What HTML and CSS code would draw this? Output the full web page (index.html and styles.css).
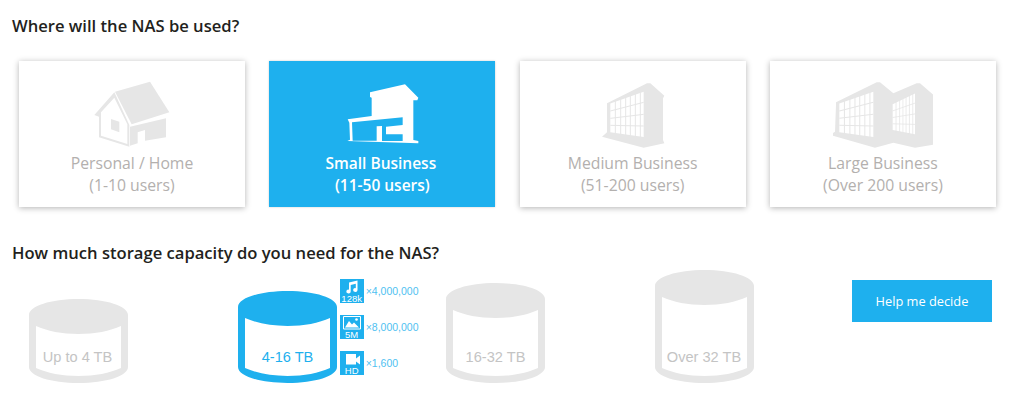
FILE: index.html
```html
<!DOCTYPE html>
<html lang="en">

<head>
    <meta charset="UTF-8">
    <meta name="viewport" content="width=device-width, initial-scale=1.0">
    <title>NAS Selector</title>
    <link rel="stylesheet" href="styles.css">
</head>

<body>
    <svg class="defs" width="0" height="0">
        <defs>
            <g id="windows">
                <path class="glass" d="M0 35V0.5L100 -35V101L0 87Z" />
                <path class="bars" d="M15 -10V95M31 -15V97M46 -20V99M60 -25V101M75 -30V103M90 -35V105" />
                <path class="bars" d="M0 23L100 -3M0 45L100 33M0 66L100 68" />
            </g>
        </defs>
    </svg>

    <h2 class="title">Where will the NAS be used?</h2>
    <div class="usage">
        <div class="usage-card">
            <svg class="usage-icon" viewBox="-9 0 300 240">
                <path class="grey" d="M90 50L195 20L253 112L140 148Z" />
                <path class="grey" fill-rule="evenodd" d="M88 52L28 120L42 125V187L133 215V150ZM88 68L48 112V182L127 207V148Z" />
                <path class="grey" d="M78 132L103 140V172L78 163Z" />
                <path class="grey" d="M135 155L243 130V187L180 197V165L158 172V205L135 212Z" />
            </svg>
            <div class="usage-name">Personal / Home</div>
            <div>(1-10 users)</div>
        </div>
        <div class="usage-card selected">
            <svg class="usage-icon" viewBox="6 0 300 240">
                <path class="white" d="M120 52L225 28L265 68L262 76H250V195L265 198V205L52 198L60 194L58 143L53 133L125 123V68L120 66Z" />
                <path class="blue" d="M66 142L218 127V150L168 155V178H218V198H156V153L140 154V197H68Z" />
            </svg>
            <div class="usage-name">Small Business</div>
            <div>(11-50 users)</div>
        </div>
        <div class="usage-card">
            <svg class="usage-icon" viewBox="-22 0 300 240">
                <path class="grey" d="M50 85L170 25H180L222 62L218 70V195L222 205L160 218L35 185L50 172Z" />
                <use href="#windows" transform="translate(60 85)" />
            </svg>
            <div class="usage-name">Medium Business</div>
            <div>(51-200 users)</div>
        </div>
        <div class="usage-card">
            <svg class="usage-icon" viewBox="24 0 300 240">
                <path class="grey" d="M33 82L155 22H165L205 55L275 25H285L328 62L325 70V200L330 208L270 218L205 203L150 218L15 180L30 170L33 90Z" />
                <use href="#windows" transform="translate(43 85) scale(1.02 1)" />
                <use href="#windows" transform="translate(203 87) scale(.67 .9)" />
            </svg>
            <div class="usage-name">Large Business</div>
            <div>(Over 200 users)</div>
        </div>
    </div>

    <h2 class="title">How much storage capacity do you need for the NAS?</h2>
    <div class="storage">
        <div class="disk">
            <svg width="99" height="84" viewBox="0 0 99 84">
                <path class="grey" fill-rule="evenodd" d="M0 16C0 7 22 0 49.500 0S99 7 99 16V68C99 77 77 84 49.500 84S0 77 0 68ZM7 27C18 32 33 35 49.500 35S81 32 92 27V69C81 74 66 77 49.500 77S18 74 7 69Z" />
                <text class="disk-label" x="48.500" y="63">Up to 4 TB</text>
            </svg>
        </div>
        <div class="disk on">
            <svg width="99" height="92" viewBox="0 0 99 92">
                <path class="sky" fill-rule="evenodd" d="M0 16C0 7 22 0 49.500 0S99 7 99 16V76C99 85 77 92 49.500 92S0 85 0 76ZM7 27C18 32 33 35 49.500 35S81 32 92 27V77C81 82 66 85 49.500 85S18 82 7 77Z" />
                <text class="disk-label" x="49.500" y="71">4-16 TB</text>
            </svg>
            <ul class="media">
                <li>
                    <span class="badge">
                        <svg class="badge-icon" viewBox="0 0 24 14">
                            <path class="white" d="M9 2.500L17.500 0.500V10A2.200 1.900 0 1 1 15.800 8.200V3.700L10.700 4.900V11.500A2.200 1.900 0 1 1 9 9.700Z" />
                        </svg>
                        <span class="badge-text">128k</span>
                    </span>
                    <span>×4,000,000</span>
                </li>
                <li>
                    <span class="badge">
                        <svg class="badge-icon" viewBox="0 0 24 14">
                            <path class="frame" d="M3.500 0.500H20.500V13H3.500Z" />
                            <path class="white" d="M5 11.500L9 5L12 8.500L14 6.500L19 11.500Z" />
                            <circle class="white" cx="16.500" cy="3.500" r="1.300" />
                        </svg>
                        <span class="badge-text">5M</span>
                    </span>
                    <span>×8,000,000</span>
                </li>
                <li>
                    <span class="badge">
                        <svg class="badge-icon" viewBox="0 0 24 14">
                            <path class="white" d="M6 2H16V6.500L20 3.500V12.500L16 9.500V12.500H6Z" />
                        </svg>
                        <span class="badge-text">HD</span>
                    </span>
                    <span>×1,600</span>
                </li>
            </ul>
        </div>
        <div class="disk">
            <svg width="99" height="100" viewBox="0 0 99 100">
                <path class="grey" fill-rule="evenodd" d="M0 16C0 7 22 0 49.500 0S99 7 99 16V84C99 93 77 100 49.500 100S0 93 0 84ZM7 27C18 32 33 35 49.500 35S81 32 92 27V85C81 90 66 93 49.500 93S18 90 7 85Z" />
                <text class="disk-label" x="49.500" y="79">16-32 TB</text>
            </svg>
        </div>
        <div class="disk">
            <svg width="99" height="113" viewBox="0 0 99 113">
                <path class="grey" fill-rule="evenodd" d="M0 16C0 7 22 0 49.500 0S99 7 99 16V97C99 106 77 113 49.500 113S0 106 0 97ZM7 27C18 32 33 35 49.500 35S81 32 92 27V98C81 103 66 106 49.500 106S18 103 7 98Z" />
                <text class="disk-label" x="49" y="92">Over 32 TB</text>
            </svg>
        </div>
        <button type="button" class="help">Help me decide</button>
    </div>
</body>

</html>
```

FILE: styles.css
```css
body {
    font-family: "Open Sans", Arial, sans-serif;
    background-color: #fff;
    color: #231f20;
    margin: 0;
    padding: 0;
    overflow: hidden;
}

.defs {
    position: absolute;
}

.title {
    font-size: 16.6px;
    font-weight: 600;
    line-height: 22px;
    margin: 0;
    padding-left: 12px;
}

h2:first-of-type {
    padding-top: 15px;
}

.usage {
    display: flex;
    gap: 24.33px;
    padding: 24px 0 35px 19px;
}

.usage-card {
    width: 226px;
    height: 146px;
    box-shadow: 0 1px 6px rgba(0, 0, 0, 0.3);
    color: #b3b0ae;
    font-size: 15.75px;
    line-height: 22px;
    text-align: center;
}

.usage-card.selected {
    background-color: #1eb0ee;
    box-shadow: 0 0 2px rgba(0, 0, 0, 0.2);
    color: #fff;
    font-size: 15.5px;
    font-weight: 600;
}

.usage-icon {
    display: block;
    width: 100px;
    height: 80px;
    margin: 14px auto 0;
    filter: blur(0.5px);
}

.usage-name {
    margin-top: -3px;
}

.selected .usage-name {
    padding-right: 3px;
}

.grey {
    fill: #e6e6e6;
}

.white {
    fill: #fff;
}

.blue {
    fill: #1eb0ee;
}

.sky {
    fill: #1eb0ee;
}

.glass {
    fill: #fff;
}

.bars {
    fill: none;
    stroke: #e6e6e6;
    stroke-width: 3;
}

.frame {
    fill: none;
    stroke: #fff;
    stroke-width: 1;
}

.storage {
    display: grid;
    grid-template-columns: repeat(3, 208.67px) 197px 140px;
    align-items: end;
    height: 113px;
    padding: 6px 0 0 29px;
}

.disk {
    display: flex;
    align-items: flex-end;
}

.disk > svg {
    display: block;
    flex: none;
}

.disk-label {
    fill: #c4c4c4;
    font-family: "Liberation Sans", Arial, sans-serif;
    font-size: 14.6px;
    text-anchor: middle;
}

.on .disk-label {
    fill: #1eb0ee;
}

.media {
    list-style: none;
    display: flex;
    flex-direction: column;
    gap: 12px;
    margin: 0 0 8px 3px;
    padding: 0;
    color: #4fc1f1;
    font-family: "Liberation Sans", Arial, sans-serif;
    font-size: 10.5px;
}

.media li {
    display: flex;
    align-items: center;
    gap: 2px;
}

.badge {
    display: flex;
    flex-direction: column;
    align-items: center;
    width: 24px;
    height: 24px;
    background-color: #1eb0ee;
    color: #fff;
}

.badge-icon {
    display: block;
    width: 24px;
    height: 14px;
    margin-top: 1px;
}

.badge-text {
    font-size: 9.5px;
    line-height: 9px;
}

.help {
    align-self: start;
    width: 140px;
    height: 42px;
    margin-top: 10px;
    padding: 0;
    background-color: #1eb0ee;
    border: none;
    color: #fff;
    font-family: "Open Sans", Arial, sans-serif;
    font-size: 12.8px;
    cursor: pointer;
}
```
